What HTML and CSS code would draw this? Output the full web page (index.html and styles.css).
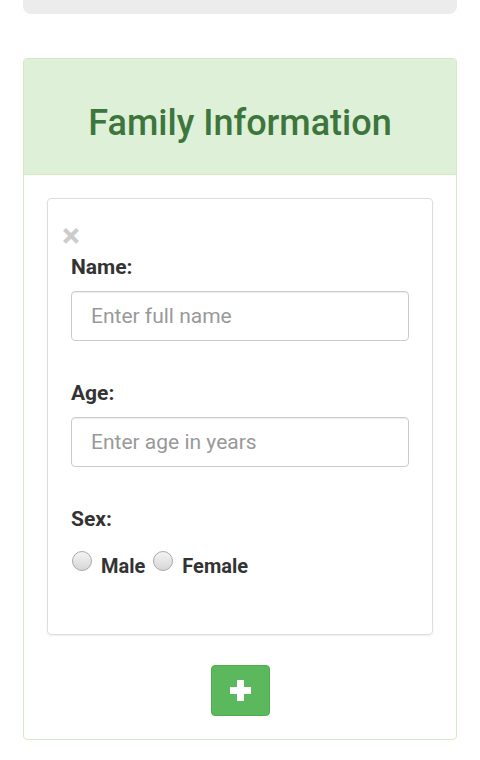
FILE: index.html
```html
<!DOCTYPE html>
<html lang="en">
    <head>
        <meta charset="UTF-8">
        <meta name="viewport" content="width=device-width, initial-scale=1.0">
        <title>Family Information</title>
        <link rel="stylesheet" href="styles.css">
    </head>
    <body>
        <main>
            <div class="well"></div>

            <div class="panel">
                <div class="panel_heading">
                    <h2>Family Information</h2>
                </div>
                <div class="panel_body">
                    <div class="member">
                        <span class="close">&times;</span>
                        <label class="field_label first" for="name_input">Name:</label>
                        <input type="text" id="name_input" class="field" placeholder="Enter full name">

                        <label class="field_label" for="age_input">Age:</label>
                        <input type="text" id="age_input" class="field" placeholder="Enter age in years">

                        <label class="field_label">Sex:</label>
                        <div class="radio_row">
                            <span class="radio"></span><span class="radio_text">Male</span>
                            <span class="radio"></span><span class="radio_text">Female</span>
                        </div>
                    </div>

                    <button class="add_button">
                        <svg width="21" height="21" viewBox="0 0 21 21">
                            <path d="M7 0h7v7h7v7h-7v7H7v-7H0V7h7z" fill="#fff"/>
                        </svg>
                    </button>
                </div>
            </div>
        </main>
    </body>
</html>
```

FILE: styles.css
```css
body {
    margin: 0;
    font-family: Roboto, "Liberation Sans", sans-serif;
    color: #333;
    background: #fff;
}

main {
    padding: 0 23px;
}

.well {
    height: 40px;
    margin-top: -26px;
    background-color: #ececec;
    border-radius: 0 0 8px 8px;
}

.panel {
    margin-top: 44px;
    border: 1px solid #d6e9c6;
    border-radius: 4px;
}

.panel_heading {
    box-sizing: border-box;
    height: 116px;
    padding-top: 13px;
    display: flex;
    align-items: center;
    justify-content: center;
    background-color: #dff0d8;
    border-bottom: 1px solid #d6e9c6;
    border-radius: 3px 3px 0 0;
}

.panel_heading h2 {
    margin: 0;
    font-size: 36px;
    font-weight: 500;
    color: #3c763d;
}

.panel_body {
    padding: 23px 23px 23px;
    display: flex;
    flex-direction: column;
    align-items: center;
}

.member {
    align-self: stretch;
    border: 1px solid #ddd;
    border-radius: 4px;
    box-shadow: 0 1px 2px rgba(0, 0, 0, 0.07);
    padding: 25px 23px 55px;
    display: flex;
    flex-direction: column;
}

.close {
    margin-left: -9px;
    height: 20px;
    padding-top: 1px;
    margin-bottom: -1px;
    font-size: 34px;
    line-height: 20px;
    font-weight: 700;
    color: #ccc;
}

.field_label {
    margin-top: 40px;
    font-size: 21px;
    font-weight: 700;
    line-height: 24px;
}

.field_label.first {
    margin-top: 11px;
}

.field {
    margin-top: 12px;
    height: 50px;
    box-sizing: border-box;
    padding: 0 19px;
    border: 1px solid #ccc;
    border-radius: 4px;
    box-shadow: inset 0 1px 1px rgba(0, 0, 0, 0.075);
    font-family: inherit;
    font-size: 21px;
    color: #555;
}

.field::placeholder {
    color: #999;
}

.radio_row {
    margin-top: 18px;
    display: flex;
    align-items: flex-start;
    height: 30px;
}

.radio {
    width: 20px;
    height: 20px;
    margin: 2px 9px 0 1px;
    border: 1px solid #a9a9a9;
    border-radius: 50%;
    background: linear-gradient(#f4f4f4, #d6d6d6);
    box-sizing: border-box;
}

.radio_text {
    margin-top: 5px;
    margin-right: 7px;
    font-size: 20px;
    font-weight: 700;
    line-height: 24px;
}

.add_button {
    margin-top: 30px;
    width: 59px;
    height: 51px;
    display: flex;
    align-items: center;
    justify-content: center;
    background-color: #5cb85c;
    border: 1px solid #4cae4c;
    border-radius: 4px;
    padding: 0;
}
```
